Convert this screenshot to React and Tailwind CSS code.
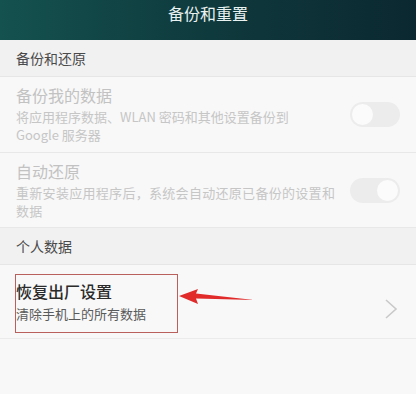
import React from "react"

const font = { fontFamily: '"Noto Sans CJK SC", "Noto Sans", sans-serif' }

const Toggle = ({ on }) => (
  <div className={`w-[50px] h-[25px] rounded-full bg-[#ececec] flex items-center px-[2px] ${on ? "justify-end" : "justify-start"}`}>
    <div className="w-[21px] h-[21px] rounded-full bg-[#fbfbfb]" />
  </div>
)

const SectionHeader = ({ children }) => (
  <div className="h-[37px] bg-[#f1f1f1] border-b border-[#e6e6e6] flex items-center px-4 text-[14px] text-[#4a4a4a]">
    {children}
  </div>
)

export default function App() {
  return (
    <div className="w-[416px] h-[394px] bg-[#f8f8f8] overflow-hidden relative" style={font}>
      {/* title bar */}
      <div className="h-[40px] bg-gradient-to-r from-[#14524f] via-[#0f3a3d] to-[#0b2830] flex justify-center pt-[3px]">
        <span className="text-[16px] leading-[20px] text-[#e9f1f1]">备份和重置</span>
      </div>

      <SectionHeader>备份和还原</SectionHeader>

      {/* backup data */}
      <div className="h-[76px] border-b border-[#e8e8e8] flex items-center justify-between pl-4 pr-4">
        <div className="flex flex-col">
          <span className="text-[16px] leading-[20px] text-[#c2c2c2]">备份我的数据</span>
          <span className="text-[13px] leading-[18px] text-[#c6c6c6] mt-[3px]">
            将应用程序数据、WLAN 密码和其他设置备份到
            <br />
            Google 服务器
          </span>
        </div>
        <Toggle on={false} />
      </div>

      {/* auto restore */}
      <div className="h-[75px] border-b border-[#e8e8e8] flex items-center justify-between pl-4 pr-4">
        <div className="flex flex-col">
          <span className="text-[16px] leading-[20px] text-[#c2c2c2]">自动还原</span>
          <span className="text-[13px] leading-[18px] text-[#c6c6c6] mt-[3px] tracking-[0.3px]">
            重新安装应用程序后，系统会自动还原已备份的设置和
            <br />
            数据
          </span>
        </div>
        <Toggle on />
      </div>

      <SectionHeader>个人数据</SectionHeader>

      {/* factory reset */}
      <div className="h-[74px] border-b border-[#ebebeb] flex items-center justify-between pl-4 pr-[18px] relative">
        <div className="flex flex-col">
          <span className="text-[16px] leading-[22px] font-medium text-[#2b2b2b]">恢复出厂设置</span>
          <span className="text-[13px] leading-[18px] text-[#5a5a5a] mt-[3px]">清除手机上的所有数据</span>
        </div>
        <svg width="14" height="20" viewBox="0 0 14 20" className="mt-[14px]">
          <path d="M2 1 L12 10 L2 19" fill="none" stroke="#c9c9c9" strokeWidth="1.6" />
        </svg>

        {/* annotation box */}
        <div className="absolute left-[15px] top-[9px] w-[163px] h-[59px] border border-[#b9605c]" />
        {/* annotation arrow */}
        <svg className="absolute left-[178px] top-[23px]" width="78" height="18" viewBox="0 0 78 18">
          <polygon points="1,8 20,1 18,5.5 76,12 18,10.5 20,16" fill="#e12a2a" />
        </svg>
      </div>
    </div>
  )
}
